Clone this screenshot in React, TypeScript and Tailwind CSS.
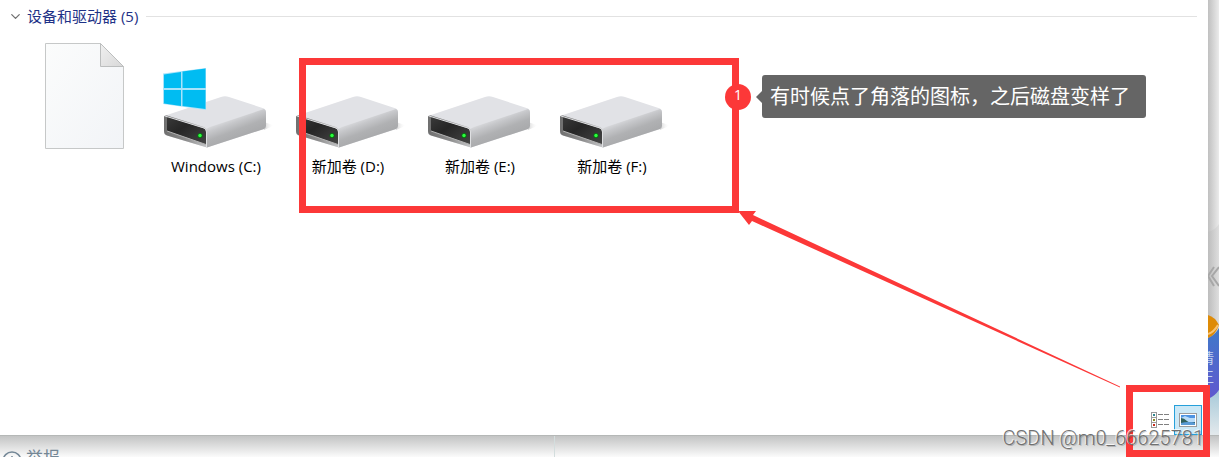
import type { ReactNode } from 'react'
import { ChevronDown } from 'lucide-react'

const drives = [
  { letter: 'C', label: 'Windows (C:)', system: true },
  { letter: 'D', label: '新加卷 (D:)', system: false },
  { letter: 'E', label: '新加卷 (E:)', system: false },
  { letter: 'F', label: '新加卷 (F:)', system: false },
]

function FileIcon() {
  return (
    <svg className="h-28 w-28" viewBox="0 0 112 112" aria-hidden="true">
      <defs>
        <linearGradient id="paper" x1="0" y1="0" x2="1" y2="1">
          <stop offset="0" stopColor="#fbfcfc" />
          <stop offset="1" stopColor="#f2f4f7" />
        </linearGradient>
        <linearGradient id="fold" x1="0" y1="0" x2="1" y2="1">
          <stop offset="0" stopColor="#f0f0f0" />
          <stop offset="1" stopColor="#d8d8d8" />
        </linearGradient>
      </defs>
      <path d="M17.5 4.5H72.5L95.5 27.5V109.5H17.5Z" fill="url(#paper)" stroke="#c6c8c8" />
      <path d="M72.5 4.5V27.5H95.5Z" fill="url(#fold)" stroke="#bcbebe" />
    </svg>
  )
}

function DriveIcon({ id, system }: { id: string; system: boolean }) {
  return (
    <svg className="h-28 w-28 overflow-visible" viewBox="0 -1 112 112" aria-hidden="true">
      <defs>
        <linearGradient id={`side-${id}`} gradientUnits="userSpaceOnUse" x1="72" y1="76" x2="80" y2="97">
          <stop offset="0" stopColor="#dfe0e3" />
          <stop offset="0.3" stopColor="#c6c7ca" />
          <stop offset="0.65" stopColor="#b0b1b3" />
          <stop offset="1" stopColor="#a9aaac" />
        </linearGradient>
        <linearGradient id={`bay-${id}`} x1="0" y1="0" x2="1" y2="1">
          <stop offset="0" stopColor="#3a3a3a" />
          <stop offset="0.4" stopColor="#262626" />
          <stop offset="1" stopColor="#454545" />
        </linearGradient>
        <linearGradient id={`frame-${id}`} x1="0" y1="0" x2="1" y2="0">
          <stop offset="0" stopColor="#6f6f6f" />
          <stop offset="0.5" stopColor="#8c8c8c" />
          <stop offset="1" stopColor="#c4c5c7" />
        </linearGradient>
        <linearGradient id={`shadow-${id}`} x1="0" y1="0" x2="1" y2="0">
          <stop offset="0" stopColor="#d4d4d4" />
          <stop offset="1" stopColor="#ffffff" stopOpacity="0" />
        </linearGradient>
      </defs>
      <path d="M104 82L114 85.5L104 90Z" fill={`url(#shadow-${id})`} />
      <path d="M4 76L61 57Q65 55.500 69 57L104 68.500Q106 69.500 106 72V86Q106 88 104 89L47 107.500L5 95Q4 94 4 92Z" fill="#e1e2e6" />
      <path d="M46 89Q48 88 50 87L104 69Q106 70 106 72V86Q106 88 104 89L47 107.500Z" fill={`url(#side-${id})`} />
      <path d="M4 77Q4 75 7 75.500L44 87Q47 88.500 47 92V107.500L7 95.500Q4 94.500 4 91Z" fill={`url(#frame-${id})`} />
      <path d="M7 78Q7 76.500 9 77L43 88Q46 89 46 92V104.500L7 91Z" fill={`url(#bay-${id})`} />
      <path d="M7 91L46 104.500" stroke="#b3b3b3" strokeWidth="1" fill="none" />
      <path d="M5 76L44 88Q46.500 89 46.500 92V107" stroke="#dfe0e2" strokeWidth="1" fill="none" />
      <circle cx="40" cy="95.500" r="2.600" fill="#0a6e12" />
      <circle cx="40" cy="95.500" r="1.700" fill="#2bff3d" />
      {system && (
        <g>
          <path d="M3 33.500L46 28V70L3 64Z" fill="#a8e3fa" />
          <path d="M4 34.500L21 32V48H4ZM22.500 31.500L45.500 28.500V48H22.500ZM4 50H21V66L4 63.500ZM22.500 50H45.500V69L22.500 66Z" fill="#00bcf2" />
        </g>
      )}
    </svg>
  )
}

function Tile({ label, children }: { label?: string; children: ReactNode }) {
  return (
    <li className="flex w-[132px] flex-col items-center">
      {children}
      {label && <span className="mt-1 text-[15px] leading-[22px] text-black">{label}</span>}
    </li>
  )
}

function DetailsIcon() {
  return (
    <svg className="h-4 w-[18px]" viewBox="0 0 18 16" shapeRendering="crispEdges" aria-hidden="true">
      {[0, 5, 10].map((y, i) => (
        <g key={y}>
          <rect x="0.5" y={y + 0.5} width="5" height="5" fill="#fff" stroke="#9a9a9a" />
          <rect x="2" y={y + 2} width="2" height="2" fill={['#2f8790', '#8b8b22', '#c62c1c'][i]} />
          <path d={`M7 ${y + 2.5}h5M13 ${y + 2.5}h5`} stroke="#808080" />
        </g>
      ))}
    </svg>
  )
}

function LargeIconsIcon() {
  return (
    <svg className="h-[14px] w-[18px]" viewBox="0 0 18 14" aria-hidden="true">
      <rect x="0.5" y="0.5" width="17" height="13" fill="#fff" stroke="#9b9b9b" />
      <rect x="2" y="2" width="14" height="10" fill="#4e93e2" />
      <path d="M2 5L6 3L11 5L16 5V9H2Z" fill="#b9dcf8" />
      <path d="M2 5Q5 5 8 8T16 9V10H2Z" fill="#31615c" />
      <path d="M2 10Q9 8 16 10V12H2Z" fill="#5a9bd5" />
    </svg>
  )
}

// Slice of the page that shows beside the explorer window
function PageEdge() {
  return (
    <div className="w-[11px] shrink-0 bg-linear-to-r from-[#c0c0c0] to-[#ebebeb]">
      <svg className="h-[435px] w-[11px]" viewBox="0 0 11 435">
        <defs>
          <linearGradient id="badge" x1="0" y1="0" x2="0" y2="1">
            <stop offset="0" stopColor="#3f79c9" />
            <stop offset="1" stopColor="#6058cf" />
          </linearGradient>
          <linearGradient id="glow" x1="0" y1="0" x2="0" y2="1">
            <stop offset="0" stopColor="#a5c9d9" />
            <stop offset="1" stopColor="#e3e9ec" />
          </linearGradient>
          <linearGradient id="edge" x1="0" y1="0" x2="1" y2="0">
            <stop offset="0" stopColor="#bdbdbd" />
            <stop offset="1" stopColor="#dedede" />
          </linearGradient>
        </defs>
        <path d="M0 232Q7 230 11 224V435H0Z" fill="url(#edge)" />
        <path d="M6 267L0 276L6 286M11 267L4 276L11 286" fill="none" stroke="#a7a7a7" strokeWidth="2" />
        <path d="M0 398Q7 396 11 390V435H0Z" fill="url(#glow)" />
        <path d="M0 338Q7 335 11 328V390Q7 396 0 399Z" fill="url(#badge)" />
        <path d="M0 315Q7 317 11 325Q7 336 0 338Z" fill="#de8b07" />
        <path d="M0 334Q6 332 10 325" fill="none" stroke="#f8c477" strokeWidth="2" />
        <g fill="#c3d3ee" fontSize="14">
          <text x="-8" y="363">请</text>
          <text x="-8" y="382">王</text>
        </g>
      </svg>
    </div>
  )
}

export default function App() {
  return (
    <div className="relative flex h-screen flex-col overflow-hidden bg-white font-['Open_Sans','Noto_Sans_CJK_SC',sans-serif]">
      <div className="flex min-h-0 flex-1">
        <main className="flex min-w-0 flex-1 flex-col bg-white">
          <div className="flex h-8 items-center pr-[11px] pl-2">
            <button type="button" className="flex items-center gap-1 text-[15px] text-[#1e3287]">
              <ChevronDown className="size-[15px] text-[#707070]" strokeWidth={2} />
              <h2>设备和驱动器 (5)</h2>
            </button>
            <div className="ml-2 h-px flex-1 bg-[#e2e2e2]" />
          </div>

          <ul className="mt-[7px] ml-[18px] flex flex-wrap">
            <Tile>
              <FileIcon />
            </Tile>
            {drives.map((drive) => (
              <Tile key={drive.letter} label={drive.label}>
                <DriveIcon id={drive.letter} system={drive.system} />
              </Tile>
            ))}
          </ul>

          <div className="mt-auto flex items-center justify-end pr-[6px]">
            <button type="button" aria-label="详细信息" className="flex size-7 items-center justify-center">
              <DetailsIcon />
            </button>
            <button
              type="button"
              aria-label="大图标"
              aria-pressed="true"
              className="flex h-[30px] w-7 items-center justify-center border border-[#26a0da] bg-[#cbe8f6]"
            >
              <LargeIconsIcon />
            </button>
          </div>
        </main>
        <PageEdge />
      </div>

      {/* Page behind the window, under its shadow */}
      <footer className="flex h-[22px] shrink-0 overflow-hidden border-t border-[#b5b8b7] bg-linear-to-b from-[#c3c4c4] to-[#fbfbfb]">
        <div className="flex w-[555px] items-start border-r border-[#d3dddd] pt-3 pl-[2px] text-[#748796]">
          <svg className="mt-[3px] size-5 shrink-0" viewBox="0 0 20 20" fill="none" stroke="currentColor" strokeWidth="1.500" aria-hidden="true">
            <circle cx="10" cy="10" r="9" />
            <path d="M10 5V11" />
          </svg>
          <span className="ml-1 text-[17px] leading-5">举报</span>
        </div>
      </footer>

      {/* Annotations */}
      <div className="absolute top-[58px] left-[299px] h-[155px] w-[440px] border-7 border-[#fc3838]" />
      <div className="absolute right-[9px] bottom-0 h-[72px] w-[84px] border-7 border-[#fc3838]" />
      <svg className="absolute top-[210px] left-[738px] h-[178px] w-[384px]" viewBox="0 0 384 178" aria-hidden="true">
        <path d="M0 1H18L15 5L382 176.500V177.500L14 11L11 15Z" fill="#fc3838" />
      </svg>
      <div className="absolute top-[75px] left-[725px] flex items-center">
        <span className="flex size-[26px] items-center justify-center rounded-full bg-[#fc3838] pb-1 text-sm text-white">1</span>
        <span className="ml-[5px] border-y-6 border-r-6 border-y-transparent border-r-[#656565]" />
        <p className="flex h-[43px] items-center rounded-[3px] bg-[#656565] px-2 pr-4 text-xl text-white">
          有时候点了角落的图标，之后磁盘变样了
        </p>
      </div>

      <div className="absolute right-[15px] bottom-[7px] font-['Roboto','Liberation_Sans',sans-serif] text-xl leading-6 font-light text-[#707070] [text-shadow:-1px_-1px_0_#ffffffc0,1px_1px_0_#00000030]">
        CSDN @m0_66625781
      </div>
    </div>
  )
}
